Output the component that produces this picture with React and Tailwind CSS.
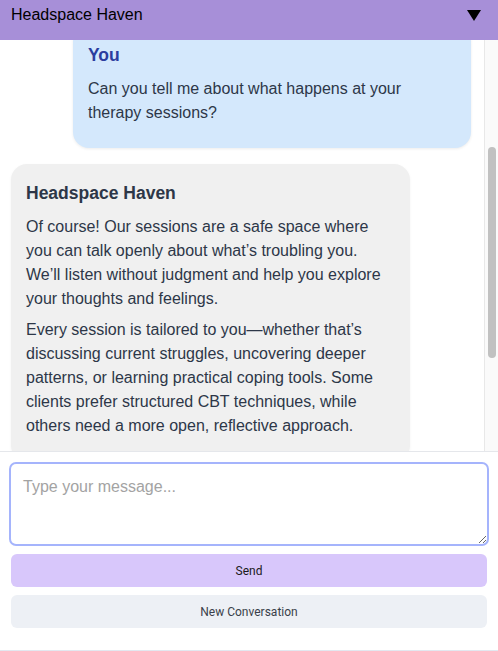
import React, { useLayoutEffect, useRef } from "react";

const FONT = { fontFamily: '"Liberation Sans", Arial, Helvetica, sans-serif' };
const BTN_FONT = { fontFamily: 'Roboto, "Liberation Sans", sans-serif' };

function Bubble({ side, title, paras, innerRef }) {
  const isUser = side === "user";
  return (
    <div className={isUser ? "flex justify-end" : "flex justify-start"} ref={innerRef}>
      <div
        className={
          isUser
            ? "w-[398px] rounded-[16px] bg-[#d4e8fc] px-[15px] pt-[16px] pb-[16px] shadow-[0_1px_3px_rgba(0,0,0,0.08)]"
            : "w-[399px] rounded-[16px] bg-[#f0f0f0] px-[15px] pt-[16px] pb-[16px] shadow-[0_1px_3px_rgba(0,0,0,0.05)]"
        }
      >
        <div
          className={
            isUser
              ? "text-[17.5px] leading-[26px] font-bold text-[#2b3d9f] mb-[9px]"
              : "text-[17.5px] leading-[26px] font-bold text-[#2d3748] mb-[9px]"
          }
        >
          {title}
        </div>
        {paras.map((p, i) => (
          <p key={i} className="text-[16px] leading-[24px] text-[#2d3748] mb-[7px]">
            {p}
          </p>
        ))}
      </div>
    </div>
  );
}

export default function App() {
  const scrollRef = useRef(null);
  const userRef = useRef(null);

  useLayoutEffect(() => {
    const s = scrollRef.current;
    const u = userRef.current;
    if (s && u) {
      s.scrollTop = u.offsetTop + 14;
    }
  }, []);

  return (
    <div className="w-[498px] h-[651px] flex flex-col bg-white" style={FONT}>
      <div className="h-[40px] shrink-0 bg-[#a78fd8] flex items-start justify-between pl-[11px] pr-[17px] pt-[6px]">
        <span className="text-[16px] leading-[18px] text-black">Headspace Haven</span>
        <svg width="14" height="11" viewBox="0 0 14 11" className="mt-[4px]">
          <polygon points="0,0 14,0 7,11" fill="#000" />
        </svg>
      </div>

      <div className="h-[411px] shrink-0 flex">
        <div ref={scrollRef} className="relative flex-1 overflow-hidden">
          <div className="flex flex-col gap-4 pl-[11px] pr-[13px] pt-[26px] pb-[20px]">
            <Bubble
              side="bot"
              title="Headspace Haven"
              paras={[
                "Hi there! Welcome to Headspace Haven.",
                "How are you feeling today? I’m here to listen whenever you’re ready to talk.",
              ]}
            />
            <Bubble
              side="user"
              innerRef={userRef}
              title="You"
              paras={["Can you tell me about what happens at your therapy sessions?"]}
            />
            <Bubble
              side="bot"
              title="Headspace Haven"
              paras={[
                "Of course! Our sessions are a safe space where you can talk openly about what’s troubling you. We’ll listen without judgment and help you explore your thoughts and feelings.",
                "Every session is tailored to you—whether that’s discussing current struggles, uncovering deeper patterns, or learning practical coping tools. Some clients prefer structured CBT techniques, while others need a more open, reflective approach.",
              ]}
            />
          </div>
        </div>
        <div className="w-[14px] shrink-0 border-l border-[#e8e8e8] bg-[#fafafa] flex flex-col">
          <div className="h-[107px] shrink-0" />
          <div className="h-[211px] w-[8px] ml-[3px] rounded-full bg-[#c1c1c1]" />
        </div>
      </div>

      <div className="flex-1 border-t border-b border-[#e5e7eb] border-b-[#e2e8f0] px-[11px] pt-[12px]">
        <textarea
          autoFocus
          placeholder="Type your message..."
          className="block w-full h-[80px] resize-y rounded-[5px] border-0 ring-2 ring-[#a5b4fc] outline-none bg-white px-[12px] pt-[13px] text-[16px] leading-[20px] text-[#2d3748] placeholder:text-[#a3a3a3]"
          style={FONT}
        />
        <button
          className="mt-[10px] w-full h-[33px] rounded-[6px] bg-[#d8c7fb] text-[12px] text-[#1a1a1a] flex items-center justify-center"
          style={BTN_FONT}
        >
          Send
        </button>
        <button
          className="mt-[8px] w-full h-[33px] rounded-[6px] bg-[#edf0f5] text-[12px] text-[#3a3f4a] flex items-center justify-center"
          style={BTN_FONT}
        >
          New Conversation
        </button>
      </div>
    </div>
  );
}
